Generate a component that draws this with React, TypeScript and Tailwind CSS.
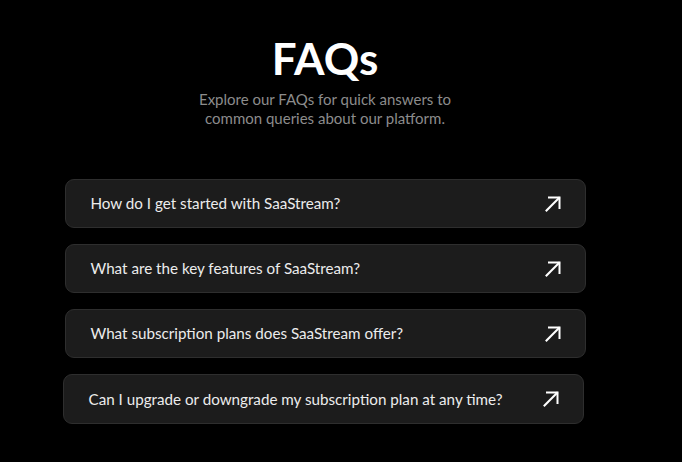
const faqs = [
  "How do I get started with SaaStream?",
  "What are the key features of SaaStream?",
  "What subscription plans does SaaStream offer?",
  "Can I upgrade or downgrade my subscription plan at any time?",
];

function Arrow() {
  return (
    <svg width="18" height="18" viewBox="0 0 18 18" fill="none" stroke="white" strokeWidth="2" strokeLinecap="square">
      <path d="M2.5 15.5 15 3" />
      <path d="M5 2.5h10.5V13" />
    </svg>
  );
}

export default function App() {
  return (
    <div className="min-h-[462px] w-full bg-black pr-[32px] pt-[34px] font-['Lato',sans-serif]">
      <div className="flex flex-col items-center">
        <h2 className="text-white text-[44px] leading-[48px] font-bold">FAQs</h2>
        <p className="mt-[8px] text-[#8c8c8c] text-[15px] leading-[19px] text-center">
          Explore our FAQs for quick answers to
          <br />
          common queries about our platform.
        </p>

        <div className="mt-[51px] flex flex-col gap-[16px] w-[521px]">
          {faqs.map((q, i) => (
            <div
              key={q}
              className={
                "h-[49px] flex items-center justify-between pl-[25px] pr-[23px] rounded-[9px] bg-[#1c1c1c] border border-[#2e2e2e] " +
                (i === 3 ? "-translate-x-[2px] h-[50px]" : "")
              }
            >
              <span className="text-[#ececec] text-[15.2px]">{q}</span>
              <Arrow />
            </div>
          ))}
        </div>
      </div>
    </div>
  );
}
